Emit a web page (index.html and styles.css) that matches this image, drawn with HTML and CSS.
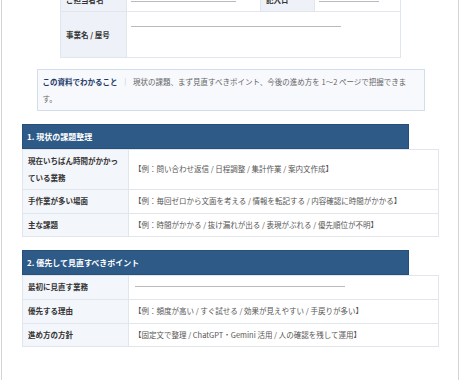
FILE: index.html
```html
<!DOCTYPE html>
<html lang="ja">
<head>
<meta charset="utf-8">
<link rel="stylesheet" href="styles.css">
</head>
<body>
<div class="page">
  <table class="meta">
    <colgroup><col class="m1"><col class="m2"><col class="m3"><col class="m4"></colgroup>
    <tr class="meta-r1">
      <th>ご担当者名</th>
      <td><span class="blank w105"></span></td>
      <th>記入日</th>
      <td><span class="blank w60"></span></td>
    </tr>
    <tr class="meta-r2">
      <th>事業名 / 屋号</th>
      <td colspan="3"><span class="blank w210"></span></td>
    </tr>
  </table>

  <div class="info">
    <strong class="info-title">この資料でわかること</strong><span class="sep">｜</span>現状の課題、まず見直すべきポイント、今後の進め方を 1〜2 ページで把握できます。
  </div>

  <h2 class="sec">1. 現状の課題整理</h2>
  <table class="grid">
    <colgroup><col class="lab"><col></colgroup>
    <tr>
      <th>現在いちばん時間がかかっている業務</th>
      <td>【例：問い合わせ返信 / 日程調整 / 集計作業 / 案内文作成】</td>
    </tr>
    <tr>
      <th>手作業が多い場面</th>
      <td>【例：毎回ゼロから文面を考える / 情報を転記する / 内容確認に時間がかかる】</td>
    </tr>
    <tr>
      <th>主な課題</th>
      <td>【例：時間がかかる / 抜け漏れが出る / 表現がぶれる / 優先順位が不明】</td>
    </tr>
  </table>

  <h2 class="sec">2. 優先して見直すべきポイント</h2>
  <table class="grid">
    <colgroup><col class="lab"><col></colgroup>
    <tr>
      <th>最初に見直す業務</th>
      <td><span class="blank w210 low"></span></td>
    </tr>
    <tr>
      <th>優先する理由</th>
      <td>【例：頻度が高い / すぐ試せる / 効果が見えやすい / 手戻りが多い】</td>
    </tr>
    <tr>
      <th>進め方の方針</th>
      <td>【固定文で整理 / ChatGPT・Gemini 活用 / 人の確認を残して運用】</td>
    </tr>
  </table>
</div>
</body>
</html>
```
FILE: styles.css
```css
* { box-sizing: border-box; }
html, body { margin: 0; padding: 0; background: #fff; }
body {
  font-family: "Noto Sans CJK JP", "Noto Sans", sans-serif;
  color: #333;
  font-size: 7.5px;
}
.page {
  margin-left: 1px;
  width: 458px;
  height: 380px;
  overflow: hidden;
  border-left: 1px solid #d4d4d4;
  border-right: 1px solid #d4d4d4;
  padding: 0 19px 0 20px;
}
table { border-collapse: collapse; }

.meta {
  width: 340px;
  margin: -14px auto 0;
  table-layout: fixed;
}
.m1 { width: 66px; }
.m2 { width: 134px; }
.m3 { width: 54px; }
.m4 { width: 86px; }
.meta th, .meta td { border: 1px solid #e1e6ed; }
.meta th {
  background: #eef2f8;
  text-align: left;
  font-weight: 700;
  color: #333;
  padding: 0 5px;
}
.meta td { padding: 0 4px; vertical-align: top; }
.meta-r1 { height: 25px; }
.meta-r1 td { padding-top: 14px; }
.meta-r2 { height: 46px; }
.meta-r2 td { padding-top: 14px; }
.blank {
  display: block;
  height: 1px;
  background: #b9b9b9;
}
.w105 { width: 105px; }
.w60 { width: 60px; }
.w210 { width: 210px; }
.low { margin-top: 7px; margin-bottom: 9px; margin-left: 1px; }

.info {
  width: 388px;
  margin: 11px auto 0;
  background: #f7f9fd;
  border: 1px solid #d3deec;
  padding: 3px 12px 3px 5px;
  line-height: 17px;
  color: #666;
}
.info-title { color: #1c3a68; font-weight: 700; }
.sep { color: #aaa; margin: 0 4px 0 4px; }

.sec {
  width: 387px;
  height: 25px;
  margin: 13px 0 0;
  background: #2e5a88;
  border: 1px solid #284f79;
  color: #fff;
  font-size: 8px;
  font-weight: 700;
  line-height: 23px;
  padding: 0 4px;
}

.grid {
  width: 417px;
  table-layout: fixed;
}
.lab { width: 106px; }
.grid th, .grid td {
  border: 1px solid #e1e6ed;
  padding: 3px 5px;
  line-height: 16.5px;
  vertical-align: middle;
}
.grid th {
  background: #f3f6fa;
  text-align: left;
  font-weight: 700;
  color: #333;
}
.grid td { color: #555; }
```
